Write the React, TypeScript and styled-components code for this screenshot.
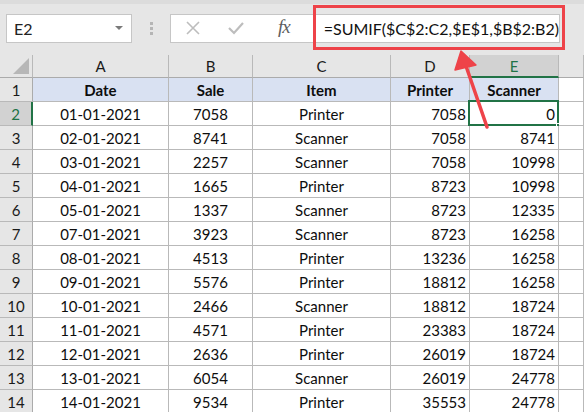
import React from "react";
import styled, { createGlobalStyle, css } from "styled-components";

const GlobalStyle = createGlobalStyle`
  html, body { margin: 0; padding: 0; background: #ffffff; }
  body { font-family: Lato, "Open Sans", sans-serif; overflow: hidden; }
`;

const Page = styled.div`
  position: relative;
  width: 584px;
  height: 412px;
  overflow: hidden;
  background: #ffffff;
`;

const Toolbar = styled.div`
  border-top: 4px solid #dcdcdc;
  background: #e6e6e6;
  display: flex;
  align-items: center;
  padding-left: 6px;
  box-sizing: border-box;
  height: 55px;
  padding-bottom: 3px;
`;

const NameBox = styled.div`
  width: 126px;
  height: 29px;
  box-sizing: border-box;
  background: #ffffff;
  border: 1px solid #c6c6c6;
  display: flex;
  align-items: center;
  justify-content: space-between;
  padding: 0 8px 0 7px;
  font-size: 16px;
  color: #222;
`;

const Caret = styled.span`
  width: 0;
  height: 0;
  border-left: 4px solid transparent;
  border-right: 4px solid transparent;
  border-top: 4px solid #7a7a7a;
`;

const Grip = styled.div`
  width: 38px;
  display: flex;
  flex-direction: column;
  align-items: center;
  gap: 2px;
  span {
    width: 3px;
    height: 3px;
    background: #b5b5b5;
  }
`;

const FormulaBar = styled.div`
  width: 390px;
  height: 29px;
  box-sizing: border-box;
  background: #ffffff;
  border: 1px solid #c6c6c6;
  display: flex;
  align-items: center;
`;

const IconBtn = styled.div<{ $w?: number }>`
  width: ${(p) => p.$w ?? 44}px;
  height: 100%;
  display: flex;
  align-items: center;
  justify-content: center;
`;

const Fx = styled.span`
  font-family: "Liberation Serif", serif;
  font-style: italic;
  font-size: 19px;
  color: #5e5e5e;
  letter-spacing: -1px;
  margin-top: -2px;
`;

const FormulaText = styled.div`
  margin-left: 14px;
  font-size: 16px;
  color: #111;
  white-space: nowrap;
`;

const Sheet = styled.div`
  display: grid;
  grid-template-columns: 33px 136px 84px 138px 79px 89px 1fr;
  grid-template-rows: 23px repeat(14, 24px);
`;

const cellBorder = css`
  box-sizing: border-box;
  border-right: 1px solid #b9b9b9;
  border-bottom: 1px solid #b9b9b9;
`;

const Corner = styled.div`
  ${cellBorder};
  background: #e6e6e6;
  position: relative;
  border-bottom-color: #ababab;
  &::after {
    content: "";
    position: absolute;
    right: 3px;
    bottom: 3px;
    width: 0;
    height: 0;
    border-left: 16px solid transparent;
    border-bottom: 16px solid #b7b7b7;
  }
`;

const ColHead = styled.div<{ $active?: boolean }>`
  ${cellBorder};
  background: ${(p) => (p.$active ? "#d2d2d2" : "#e6e6e6")};
  color: ${(p) => (p.$active ? "#217346" : "#1a1a1a")};
  border-bottom: ${(p) => (p.$active ? "2px solid #217346" : "1px solid #ababab")};
  display: flex;
  align-items: center;
  justify-content: center;
  font-size: 15px;
  padding-top: ${(p) => (p.$active ? "1px" : "0")};
`;

const RowHead = styled.div<{ $active?: boolean }>`
  ${cellBorder};
  background: ${(p) => (p.$active ? "#d2d2d2" : "#e6e6e6")};
  color: ${(p) => (p.$active ? "#217346" : "#1a1a1a")};
  border-right: ${(p) => (p.$active ? "2px solid #217346" : "1px solid #ababab")};
  display: flex;
  align-items: center;
  justify-content: center;
  font-size: 15px;
`;

const Cell = styled.div<{ $align?: "left" | "center" | "right"; $head?: boolean; $selected?: boolean }>`
  ${cellBorder};
  position: relative;
  background: ${(p) => (p.$head ? "#d9e1f2" : "#ffffff")};
  font-weight: ${(p) => (p.$head ? 700 : 400)};
  font-size: 15px;
  color: #0d0d0d;
  display: flex;
  align-items: center;
  justify-content: ${(p) =>
    p.$align === "right" ? "flex-end" : p.$align === "left" ? "flex-start" : "center"};
  padding: 0 3px;
  white-space: nowrap;
  ${(p) =>
    p.$selected &&
    css`
      &::before {
        content: "";
        position: absolute;
        left: -2px;
        top: -2px;
        right: -1px;
        bottom: -1px;
        border: 2px solid #217346;
      }
      &::after {
        content: "";
        position: absolute;
        right: -4px;
        bottom: -4px;
        width: 5px;
        height: 5px;
        background: #217346;
        border: 1px solid #fff;
        border-right: none;
        border-bottom: none;
      }
    `}
`;

const HighlightBox = styled.div`
  position: absolute;
  left: 313px;
  top: 5px;
  width: 252px;
  height: 45px;
  box-sizing: border-box;
  border: 3px solid #ee4349;
  pointer-events: none;
`;

const Overlay = styled.svg`
  position: absolute;
  left: 0;
  top: 0;
  pointer-events: none;
`;

type Row = [string, number, string, number, number];

const rows: Row[] = [
  ["01-01-2021", 7058, "Printer", 7058, 0],
  ["02-01-2021", 8741, "Scanner", 7058, 8741],
  ["03-01-2021", 2257, "Scanner", 7058, 10998],
  ["04-01-2021", 1665, "Printer", 8723, 10998],
  ["05-01-2021", 1337, "Scanner", 8723, 12335],
  ["07-01-2021", 3923, "Scanner", 8723, 16258],
  ["08-01-2021", 4513, "Printer", 13236, 16258],
  ["09-01-2021", 5576, "Printer", 18812, 16258],
  ["10-01-2021", 2466, "Scanner", 18812, 18724],
  ["11-01-2021", 4571, "Printer", 23383, 18724],
  ["12-01-2021", 2636, "Printer", 26019, 18724],
  ["13-01-2021", 6054, "Scanner", 26019, 24778],
  ["14-01-2021", 9534, "Printer", 35553, 24778],
];

const cols = ["A", "B", "C", "D", "E", ""];

export default function App() {
  return (
    <Page>
      <GlobalStyle />
      <Toolbar>
        <NameBox>
          <span>E2</span>
          <Caret />
        </NameBox>
        <Grip>
          <span />
          <span />
          <span />
        </Grip>
        <FormulaBar>
          <IconBtn>
            <svg width="14" height="14" viewBox="0 0 14 14">
              <path d="M1 1 L13 13 M13 1 L1 13" stroke="#bdbdbd" strokeWidth="1.6" fill="none" />
            </svg>
          </IconBtn>
          <IconBtn>
            <svg width="16" height="14" viewBox="0 0 16 14">
              <path d="M1 7 L6 12 L15 2" stroke="#bdbdbd" strokeWidth="2.2" fill="none" />
            </svg>
          </IconBtn>
          <IconBtn $w={52}>
            <Fx>fx</Fx>
          </IconBtn>
          <FormulaText>=SUMIF($C$2:C2,$E$1,$B$2:B2)</FormulaText>
        </FormulaBar>
      </Toolbar>
      <Sheet>
        <Corner />
        {cols.map((c, i) => (
          <ColHead key={i} $active={c === "E"}>
            {c}
          </ColHead>
        ))}
        <RowHead>1</RowHead>
        <Cell $head>Date</Cell>
        <Cell $head>Sale</Cell>
        <Cell $head>Item</Cell>
        <Cell $head>Printer</Cell>
        <Cell $head>Scanner</Cell>
        <Cell />
        {rows.map((r, i) => (
          <React.Fragment key={i}>
            <RowHead $active={i === 0}>{i + 2}</RowHead>
            <Cell>{r[0]}</Cell>
            <Cell>{r[1]}</Cell>
            <Cell>{r[2]}</Cell>
            <Cell $align="right">{r[3]}</Cell>
            <Cell $align="right" $selected={i === 0}>
              {r[4]}
            </Cell>
            <Cell />
          </React.Fragment>
        ))}
      </Sheet>
      <HighlightBox />
      <Overlay width="584" height="412">
        <line x1="487" y1="127" x2="466" y2="66" stroke="#ee4349" strokeWidth="3.5" strokeLinecap="round" />
        <polygon points="461,51 455,70 476,65" fill="#ee4349" stroke="#ee4349" strokeWidth="1.5" strokeLinejoin="round" />
      </Overlay>
    </Page>
  );
}
